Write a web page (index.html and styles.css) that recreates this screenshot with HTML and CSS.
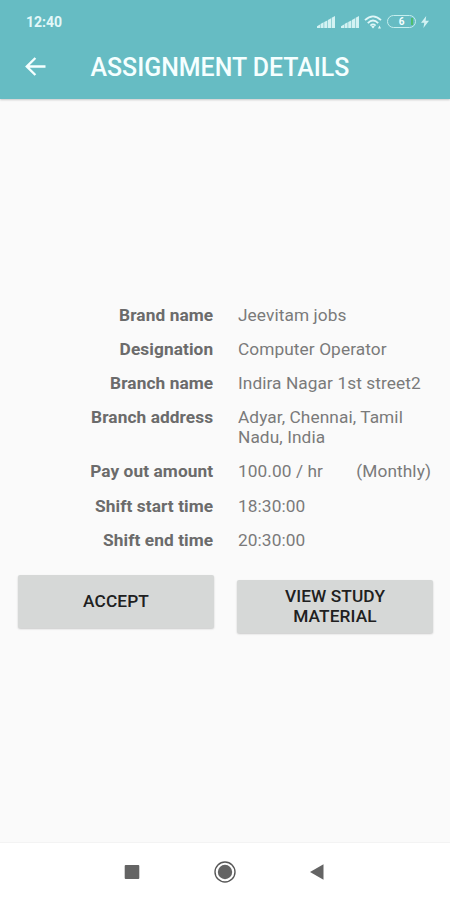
FILE: index.html
```html
<!DOCTYPE html>
<html lang="en">

<head>
    <meta charset="UTF-8">
    <meta name="viewport" content="width=device-width, initial-scale=1.0">
    <title>Assignment Details</title>
    <link rel="stylesheet" href="styles.css">
</head>

<body>
    <header class="header">
        <div class="status-bar">
            <span class="clock">12:40</span>
            <div class="status-icons">
                <svg class="signal" width="18" height="12" viewBox="0 0 18 12">
                    <path d="M0 12V10.2L3 8.6V12zM3.5 12V8L6.6 6.3V12zM7.2 12V6L10.3 4.4V12zM10.9 12V4L14.1 2.3V12zM14.7 12V1.8L18 0V12z" />
                </svg>
                <svg class="signal" width="18" height="12" viewBox="0 0 18 12">
                    <path d="M0 12V10.2L3 8.6V12zM3.5 12V8L6.6 6.3V12zM7.2 12V6L10.3 4.4V12zM10.9 12V4L14.1 2.3V12zM14.7 12V1.8L18 0V12z" />
                </svg>
                <svg class="wifi" width="18" height="14" viewBox="0 0 18 14">
                    <path d="M1 5.2Q9 -2.4 17 5.2M3.8 8.1Q9 3 14.2 8.1M6.4 10.6Q9 8.2 11.6 10.6" />
                    <path class="solid" d="M7.2 11.5Q9 10.2 10.8 11.5L9 13.5zM14 13.5L15.5 10.5L17 13.5z" />
                </svg>
                <div class="battery"><span>6</span></div>
                <svg class="bolt" width="8" height="12" viewBox="0 0 8 12">
                    <path d="M5.2 0L0 6.8H3.3L2.4 12L8 4.8H4.6z" />
                </svg>
            </div>
        </div>
        <div class="toolbar">
            <svg class="back" width="22" height="20" viewBox="0 0 22 20">
                <path d="M20.5 9.5H2M10.4 1L1.8 9.5L10.4 18" />
            </svg>
            <h1>ASSIGNMENT DETAILS</h1>
        </div>
    </header>

    <main class="content">
        <dl class="details">
            <dt>Brand name</dt>
            <dd>Jeevitam jobs</dd>
            <dt>Designation</dt>
            <dd>Computer Operator</dd>
            <dt>Branch name</dt>
            <dd>Indira Nagar 1st street2</dd>
            <dt>Branch address</dt>
            <dd>Adyar, Chennai, Tamil<br>Nadu, India</dd>
            <dt>Pay out amount</dt>
            <dd class="pay"><span>100.00 / hr</span><span>(Monthly)</span></dd>
            <dt>Shift start time</dt>
            <dd>18:30:00</dd>
            <dt>Shift end time</dt>
            <dd>20:30:00</dd>
        </dl>
        <div class="actions">
            <button type="button">ACCEPT</button>
            <button type="button" class="study">VIEW STUDY<br>MATERIAL</button>
        </div>
    </main>

    <nav class="nav-bar">
        <svg width="22" height="22" viewBox="0 0 22 22">
            <rect x="3.7" y="4" width="14.6" height="14" rx="1" />
        </svg>
        <svg width="22" height="22" viewBox="0 0 22 22">
            <circle class="ring" cx="11" cy="11" r="10" />
            <circle cx="11" cy="11" r="7.2" />
        </svg>
        <svg width="22" height="22" viewBox="0 0 22 22">
            <path d="M3 11L16.5 3.3V18.7z" />
        </svg>
    </nav>
</body>
</html>
```

FILE: styles.css
```css
* {
    box-sizing: border-box;
}

body {
    font-family: Roboto, sans-serif;
    background-color: #fafafa;
    margin: 0;
    height: 900px;
    display: flex;
    flex-direction: column;
    overflow: hidden;
}

.header {
    height: 99px;
    background-color: #66bcc3;
    color: #f5ffff;
    box-shadow: 0 1px 2px rgba(0, 0, 0, 0.2);
}

.status-bar {
    display: flex;
    justify-content: space-between;
    align-items: center;
    height: 43px;
    padding: 0 21px 0 26px;
}

.clock {
    font-size: 14px;
    font-weight: 700;
    color: #e3f8f9;
}

.status-icons {
    display: flex;
    align-items: center;
    gap: 5px;
    fill: #d3f2f3;
}

.signal {
    margin-right: 0.5px;
}

.wifi {
    fill: none;
    stroke: #e0f7f8;
    stroke-width: 1.8;
}

.wifi .solid {
    fill: #e0f7f8;
    stroke: none;
}

.battery {
    width: 29px;
    height: 13px;
    border: 1.5px solid #c5eeee;
    border-radius: 7px;
    font-size: 10px;
    font-weight: 700;
    line-height: 11px;
    text-align: center;
    background: linear-gradient(#4fbd6b, #4fbd6b) 23px 2px / 2px 7px no-repeat;
}

.toolbar {
    display: flex;
    align-items: center;
    height: 48px;
    padding-left: 25px;
}

.back {
    fill: none;
    stroke: #f5ffff;
    stroke-width: 2.4;
}

h1 {
    margin: 1px 0 0 43.5px;
    font-size: 24.9px;
    font-weight: 500;
    white-space: nowrap;
}

.content {
    flex: 1;
    padding-top: 206.5px;
}

.details {
    display: grid;
    grid-template-columns: 213.2px 1fr;
    column-gap: 24.8px;
    row-gap: 14.7px;
    margin: 0;
    font-size: 17.3px;
    letter-spacing: 0.08px;
    line-height: 19.6px;
    color: #7a7a7a;
}

dt {
    text-align: right;
    font-weight: 700;
    color: #6b6b6b;
}

dd {
    margin: 0;
    white-space: nowrap;
}

.pay {
    display: flex;
    justify-content: space-between;
    padding-right: 19px;
}

.actions {
    display: flex;
    gap: 23px;
    padding: 25px 17px 0 18px;
}

button {
    flex: 1;
    height: 53px;
    padding: 0 0 1px;
    border: none;
    border-radius: 2px;
    background-color: #d6d8d7;
    box-shadow: 0 1px 2px rgba(0, 0, 0, 0.2);
    font-family: inherit;
    font-size: 17.3px;
    font-weight: 500;
    letter-spacing: 0.1px;
    line-height: 20px;
    color: #202020;
}

.study {
    margin-top: 5px;
}

.nav-bar {
    display: flex;
    justify-content: center;
    align-items: center;
    gap: 71px;
    height: 58px;
    background-color: #ffffff;
    border-top: 1px solid #f3f3f3;
    fill: #646464;
}

.ring {
    fill: none;
    stroke: #585858;
    stroke-width: 1.4;
}
```
